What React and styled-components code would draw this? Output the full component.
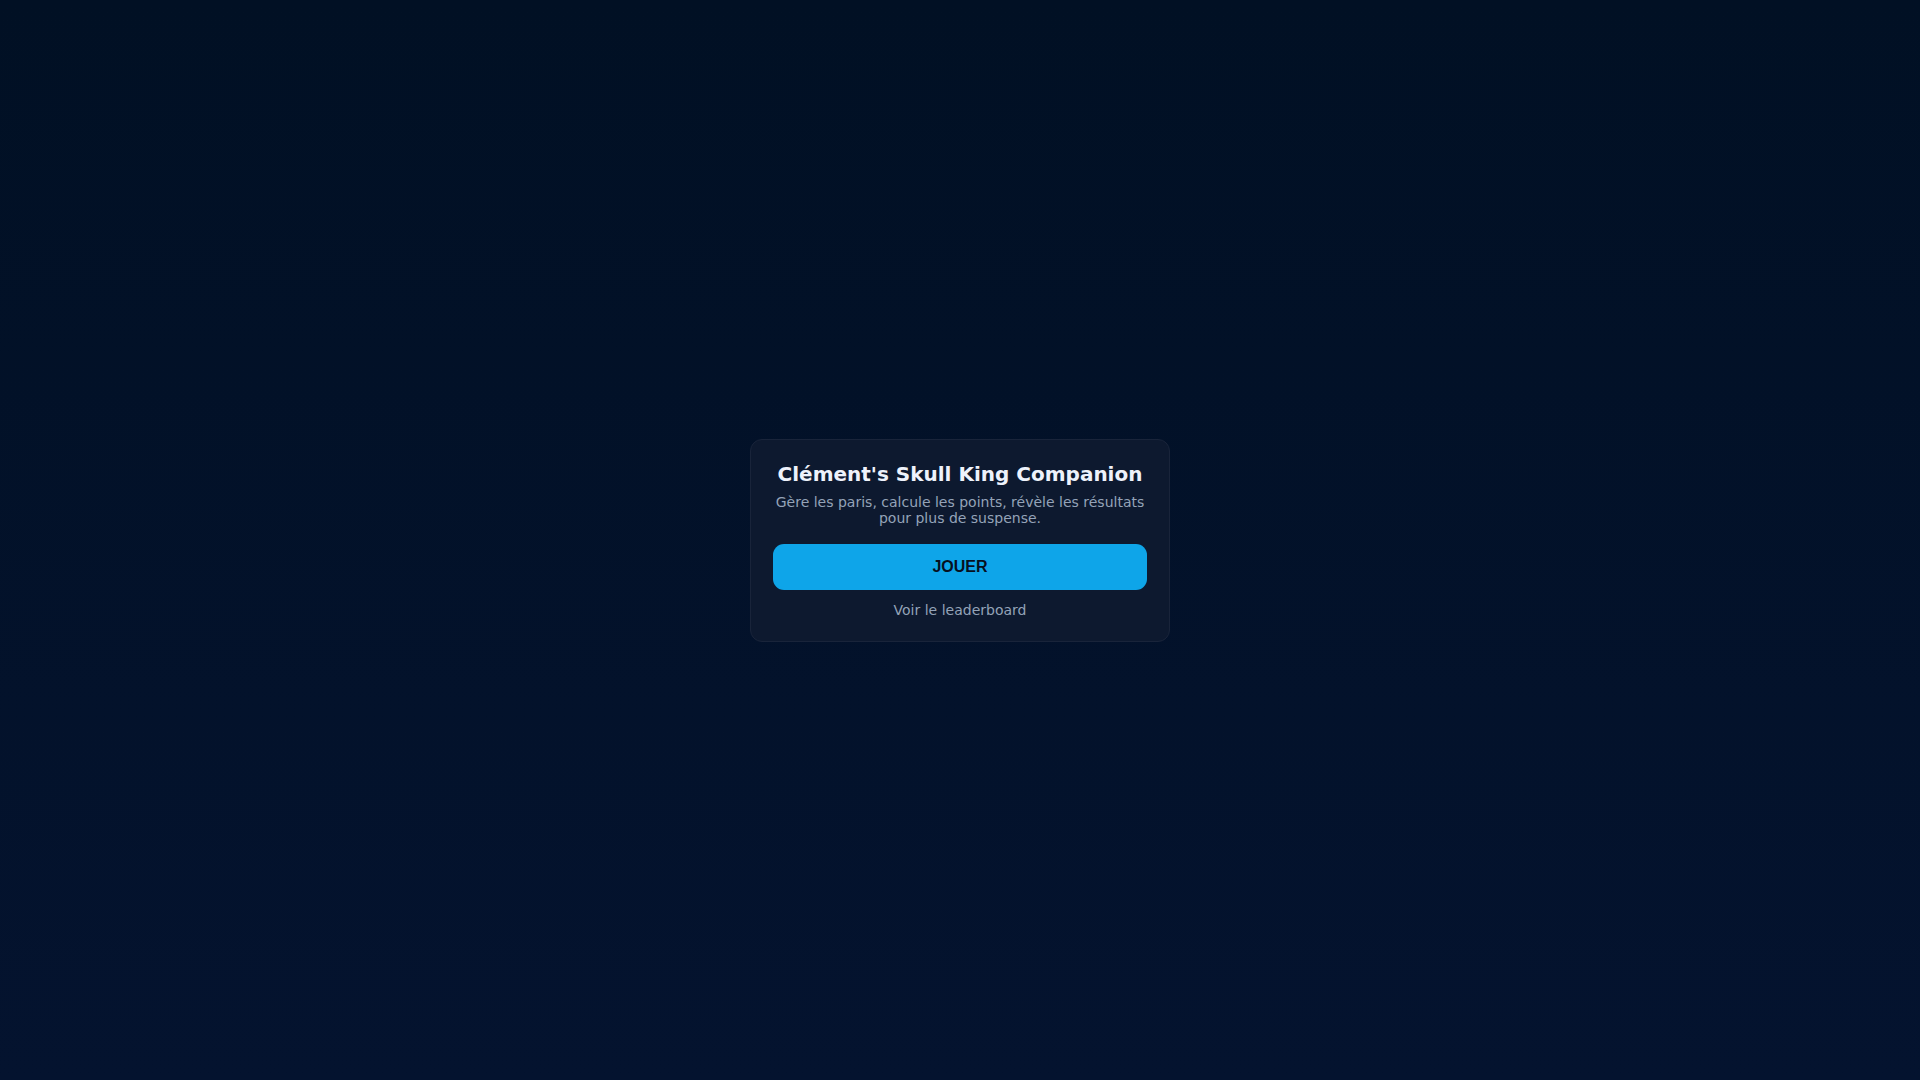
import React from "react";
import styled, { createGlobalStyle } from "styled-components";

const GlobalStyle = createGlobalStyle`
  html, body { margin: 0; padding: 0; }
  body {
    font-family: "DejaVu Sans", sans-serif;
    background: linear-gradient(180deg, #011024 0%, #04132f 100%);
    min-height: 100vh;
  }
`;

const Page = styled.main`
  min-height: 100vh;
  display: flex;
  align-items: center;
  justify-content: center;
`;

const Card = styled.section`
  box-sizing: border-box;
  width: 420px;
  padding: 22.5px 22px 22.5px;
  border: 1px solid #19243a;
  border-radius: 12px;
  background: #0d192f;
  display: flex;
  flex-direction: column;
  align-items: stretch;
  text-align: center;
`;

const Title = styled.h1`
  margin: 0 0 8px;
  font-size: 20px;
  font-weight: 700;
  color: #eef2fb;
  line-height: normal;
`;

const Subtitle = styled.p`
  margin: 0 0 18px;
  font-size: 14px;
  line-height: 16px;
  color: #94a3b8;
`;

const PlayButton = styled.button`
  height: 46px;
  border: none;
  border-radius: 11px;
  background: #0ea5e9;
  color: #07101f;
  font-family: "Liberation Sans", Arial, sans-serif;
  font-size: 16px;
  font-weight: 700;
  cursor: pointer;
`;

const Link = styled.a`
  margin-top: 12px;
  font-size: 14px;
  line-height: 16px;
  color: #94a3b8;
  text-decoration: none;
  cursor: pointer;
`;

export default function App() {
  return (
    <>
      <GlobalStyle />
      <Page>
        <Card>
          <Title>Clément's Skull King Companion</Title>
          <Subtitle>
            Gère les paris, calcule les points, révèle les résultats pour plus de suspense.
          </Subtitle>
          <PlayButton>JOUER</PlayButton>
          <Link>Voir le leaderboard</Link>
        </Card>
      </Page>
    </>
  );
}
